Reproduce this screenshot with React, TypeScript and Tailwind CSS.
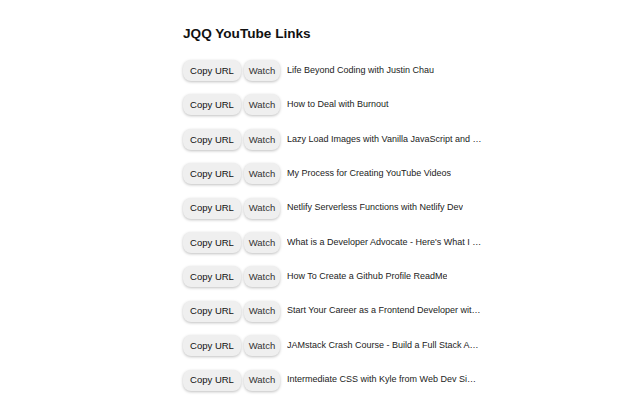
import React from "react";

const videos = [
  "Life Beyond Coding with Justin Chau",
  "How to Deal with Burnout",
  "Lazy Load Images with Vanilla JavaScript and Intersection Observer",
  "My Process for Creating YouTube Videos",
  "Netlify Serverless Functions with Netlify Dev",
  "What is a Developer Advocate - Here's What I Do",
  "How To Create a Github Profile ReadMe",
  "Start Your Career as a Frontend Developer with Vue",
  "JAMstack Crash Course - Build a Full Stack Application",
  "Intermediate CSS with Kyle from Web Dev Simplified",
];

const btn =
  "h-[21px] rounded-[8px] bg-[#efefef] text-[#111] shadow-[0_1px_3px_rgba(0,0,0,0.25)] text-[9.5px] leading-none shrink-0";

export default function App() {
  return (
    <div className="min-h-screen bg-white font-['Liberation_Sans',Arial,sans-serif]">
      <div className="ml-[183px] w-[300px] pt-[26px]">
        <h1 className="text-[13.6px] font-bold text-[#111] leading-[16px] mb-[18px]">
          JQQ YouTube Links
        </h1>
        <div className="flex flex-col gap-[13.4px]">
          {videos.map((title) => (
            <div key={title} className="flex items-center">
              <button className={`${btn} w-[58px]`}>Copy URL</button>
              <button className={`${btn} w-[36px] ml-[3px] text-[#333]`}>Watch</button>
              <span className="ml-[7px] truncate text-[9px] text-[#222]">{title}</span>
            </div>
          ))}
        </div>
      </div>
    </div>
  );
}
